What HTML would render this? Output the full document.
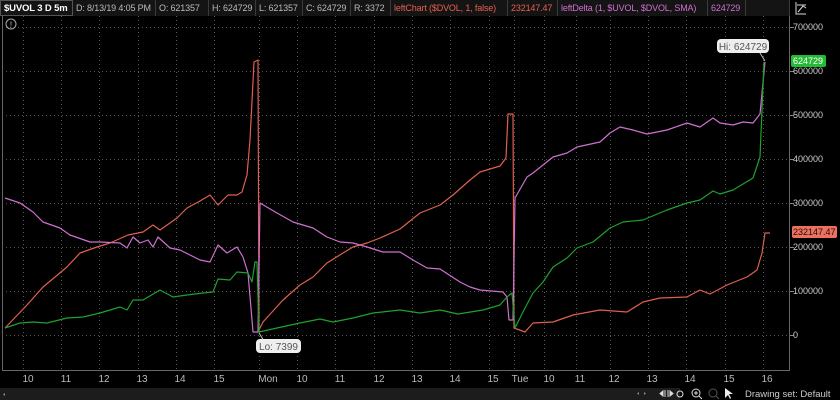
<!DOCTYPE html>
<html><head><meta charset="utf-8"><style>
*{margin:0;padding:0;box-sizing:border-box}
body{width:840px;height:400px;background:#000;overflow:hidden;font-family:"Liberation Sans",sans-serif;position:relative}
.bar{position:absolute;left:0;top:0;height:16px;width:790px;background:#0e0e0e;border-bottom:1px solid #333}
.c{position:absolute;top:0;height:16px;line-height:16px;font-size:9px;letter-spacing:-0.15px;color:#bbb;padding-left:3px;border-right:1px solid #3a3a3a;background:#141414;white-space:nowrap;overflow:hidden}
.ax{position:absolute;font-size:9px;color:#ccc}
.xl{position:absolute;top:374px;font-size:10px;color:#bbb;transform:translateX(-50%)}
</style></head><body>
<div class="bar">
<div class="c" style="left:0;width:73px;color:#fff;font-weight:bold;border:1px solid #555;font-size:9.5px">$UVOL 3 D 5m</div>
<div class="c" style="left:73px;width:83px">D: 8/13/19 4:05 PM</div>
<div class="c" style="left:156px;width:53px">O: 621357</div>
<div class="c" style="left:209px;width:47px">H: 624729</div>
<div class="c" style="left:256px;width:47px">L: 621357</div>
<div class="c" style="left:303px;width:48px">C: 624729</div>
<div class="c" style="left:351px;width:40px">R: 3372</div>
<div class="c" style="left:391px;width:117px;color:#e8604f">leftChart ($DVOL, 1, false)</div>
<div class="c" style="left:508px;width:50px;color:#e8604f">232147.47</div>
<div class="c" style="left:558px;width:150px;color:#d070d0">leftDelta (1, $UVOL, $DVOL, SMA)</div>
<div class="c" style="left:708px;width:38px;color:#d070d0">624729</div>
<div class="c" style="left:746px;width:44px"></div>
</div>
<svg width="840" height="400" style="position:absolute;left:0;top:0">
<g stroke="#555" stroke-width="1" stroke-dasharray="1,3" fill="none">
<path d="M2 27.5H789M2 71.5H789M2 115.5H789M2 159.5H789M2 203.5H789M2 247.5H789M2 291.5H789M2 335.5H789"/>
<path d="M23.5 16V370M61.5 16V370M99.5 16V370M138.5 16V370M176.5 16V370M214.5 16V370M259.5 16V370M297.5 16V370M335.5 16V370M374.5 16V370M412.5 16V370M450.5 16V370M489.5 16V370M514.5 16V370M544.5 16V370M576.5 16V370M610.5 16V370M648.5 16V370M686.5 16V370M725.5 16V370M763.5 16V370"/>
</g>
<path d="M2.5 16V370.5H789.5V16" stroke="#666" fill="none"/>
<circle cx="11" cy="24" r="5" stroke="#aaa" fill="none"/><text x="11" y="27.5" font-size="8" fill="#ccc" text-anchor="middle" font-family="Liberation Sans">!</text>
<g fill="none" stroke-width="1.2" stroke-linejoin="round">
<polyline stroke="#e0604f" points="5,328 27,305 43,287 67,267 80,253 97,247 110,243 128,235 143,232 153,225 160,230 177,218 187,208 200,201 210,195 218,205 228,195 237,195 242,192 247,175 250,140 254,62 258,60 259,330 263,322 283,300 300,285 313,277 327,263 343,253 353,247 367,243 380,238 400,229 420,213 440,205 453,195 470,180 480,172 500,166 506,158 508,114 513,114 514,328 525,332 533,323 553,322 573,315 600,310 627,312 643,302 660,298 687,297 700,290 710,294 727,285 747,277 757,270 762,253 765,233 770,233"/>
<polyline stroke="#d070d0" points="5,198 20,203 33,212 43,222 60,228 70,235 90,242 100,242 120,243 127,248 133,237 140,243 148,240 153,247 158,237 170,248 180,250 190,255 200,260 210,262 218,245 227,253 237,247 243,257 248,273 253,332 258,332 260,203 277,213 293,222 313,228 327,237 340,242 353,243 367,247 383,252 400,252 413,260 427,268 440,269 460,282 470,287 480,290 503,292 507,297 509,320 513,320 515,198 527,177 533,173 553,157 567,153 577,147 600,142 610,133 620,127 633,130 647,134 667,130 687,123 700,127 713,118 720,123 733,125 743,122 753,123 760,114 765,62"/>
<polyline stroke="#1fa02f" points="5,328 20,323 33,322 47,323 67,318 83,317 100,313 120,307 127,310 133,300 143,300 160,290 173,297 187,295 203,293 213,292 218,279 230,280 237,272 248,273 252,282 255,262 257,262 259,332 277,328 300,323 320,319 333,322 353,318 373,313 400,310 420,313 440,310 458,314 483,310 500,305 507,297 512,293 515,328 525,308 533,293 543,282 553,267 567,258 577,248 593,242 610,228 623,222 643,220 667,210 687,203 700,200 713,191 720,194 733,190 753,178 760,157 764,62"/>
</g>
<path d="M259 333L264 341" stroke="#bbb"/><path d="M765 61L760 53" stroke="#bbb"/>
<rect x="256" y="339" width="45" height="14" rx="4" fill="#eee"/>
<text x="278.5" y="350" font-size="10" fill="#555" text-anchor="middle" font-family="Liberation Sans">Lo: 7399</text>
<rect x="717" y="39" width="52" height="14" rx="4" fill="#eee"/>
<text x="743" y="50" font-size="10" fill="#555" text-anchor="middle" font-family="Liberation Sans">Hi: 624729</text>
<path d="M790 27.5H794M790 71.5H794M790 115.5H794M790 159.5H794M790 203.5H794M790 247.5H794M790 291.5H794M790 335.5H794" stroke="#888"/>
<path d="M796 2V14H806M798 12L803 6L806 8M797 5H806" stroke="#ddd" fill="none"/>
<rect x="0" y="388" width="680" height="12" fill="#1c1c1c"/>
<path d="M5 393L3 394.5L5 396Z" fill="#888"/>
<path d="M639 392L637 393.5L639 395ZM644 392L646 393.5L644 395Z" fill="#888"/>
<path d="M660 393.5L663 391V396ZM665 390V397M668 390V397M673 393.5L670 391V396Z" fill="#ddd" stroke="#ddd"/>
<circle cx="680" cy="394" r="3" stroke="#ddd" fill="none"/>
<circle cx="696" cy="393" r="4" stroke="#ddd" fill="none"/><path d="M699 396L702 399M694 393H698M696 391V395" stroke="#ddd"/>
<circle cx="713" cy="393" r="4" stroke="#555" fill="none"/><path d="M716 396L719 399" stroke="#555"/>
<path d="M725 388V398L728 395L730 399L731 398L729 394H733Z" fill="#eee"/>
</svg>
<div class="ax" style="left:793px;top:22px">700000</div>
<div style="position:absolute;left:791px;top:55px;width:35px;height:12px;background:#22bb33;border-radius:2px;color:#fff;font-size:9px;line-height:12px;padding-left:2px">624729</div>
<div class="ax" style="left:793px;top:66px">600000</div>
<div class="ax" style="left:793px;top:110px">500000</div>
<div class="ax" style="left:793px;top:154px">400000</div>
<div class="ax" style="left:793px;top:198px">300000</div>
<div style="position:absolute;left:792px;top:226px;width:45px;height:12px;background:#f07060;border-radius:2px;color:#111;font-size:9px;line-height:12px;padding-left:1px">232147.47</div>
<div class="ax" style="left:793px;top:242px">200000</div>
<div class="ax" style="left:793px;top:286px">100000</div>
<div class="ax" style="left:793px;top:330px">0</div>
<div class="xl" style="left:28px">10</div><div class="xl" style="left:66px">11</div><div class="xl" style="left:104px">12</div><div class="xl" style="left:142px">13</div><div class="xl" style="left:180px">14</div><div class="xl" style="left:219px">15</div><div class="xl" style="left:268px">Mon</div><div class="xl" style="left:302px">10</div><div class="xl" style="left:340px">11</div><div class="xl" style="left:379px">12</div><div class="xl" style="left:417px">13</div><div class="xl" style="left:455px">14</div><div class="xl" style="left:493px">15</div><div class="xl" style="left:520px">Tue</div><div class="xl" style="left:549px">10</div><div class="xl" style="left:580px">11</div><div class="xl" style="left:614px">12</div><div class="xl" style="left:652px">13</div><div class="xl" style="left:690px">14</div><div class="xl" style="left:729px">15</div><div class="xl" style="left:767px">16</div>
<div style="position:absolute;left:745px;top:389px;font-size:9.5px;color:#ccc">Drawing set: Default</div>
</body></html>
